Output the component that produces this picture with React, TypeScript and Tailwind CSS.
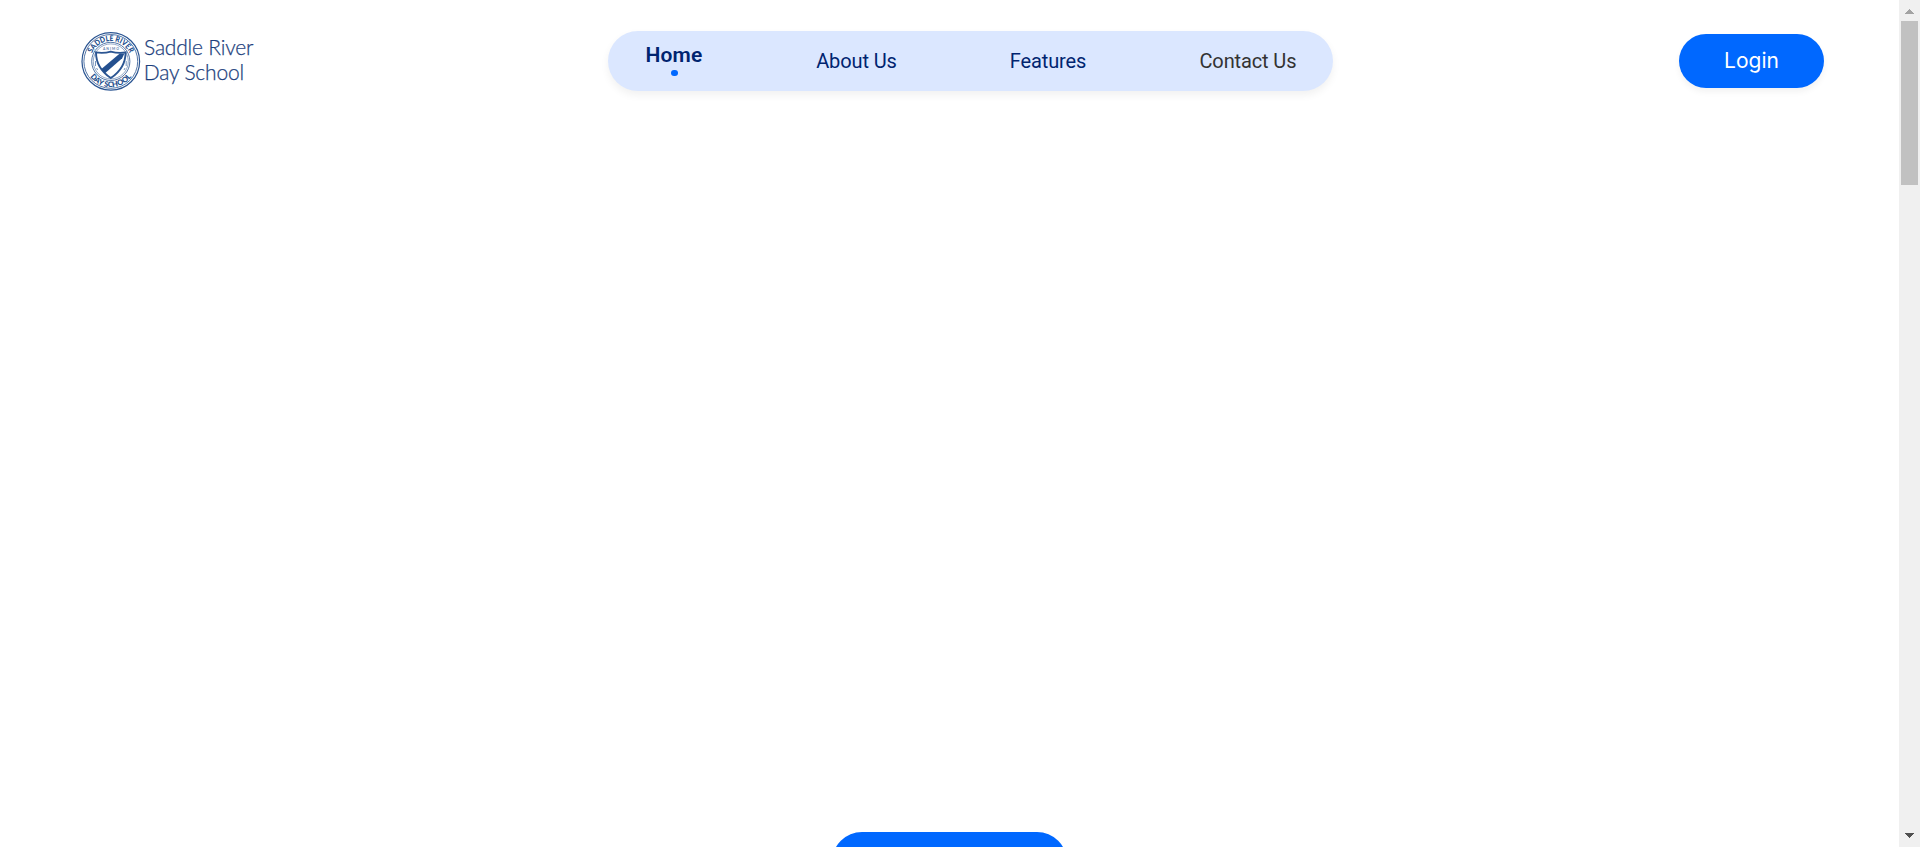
const links = [
  { label: 'About Us', width: 'w-[80px]', color: 'text-[#002470]' },
  { label: 'Features', width: 'w-[76px]', color: 'text-[#002470]' },
  { label: 'Contact Us', width: 'w-[96px]', color: 'text-[#333333]' },
];

function Logo() {
  return (
    <svg className="h-[60px] w-[176px] shrink-0" viewBox="0 0 176 60" fill="none" aria-label="Saddle River Day School">
      <defs>
        <path id="seal-top" d="M9.6 30.2 A20.2 20.2 0 0 1 50 30.2" />
        <path id="seal-bottom" d="M3.9 30.2 A25.9 25.9 0 0 0 55.7 30.2" />
      </defs>
      <g stroke="#2b5592">
        <circle cx="29.8" cy="30.4" r="28.8" strokeWidth="1.2" />
        <circle cx="29.8" cy="30.4" r="26.9" strokeWidth=".8" />
        <circle cx="29.8" cy="30.4" r="19.1" strokeWidth=".8" />
        <circle cx="29.8" cy="30.4" r="17.5" strokeWidth=".5" />
        <path d="M15 21.4Q22.5 22.6 29.8 20.6Q37.2 22.6 44.6 21.4Q44.6 37 29.8 47Q15 37 15 21.4Z" fill="white" strokeWidth="1.9" />
      </g>
      <path d="M20.4 38L38.8 22.4L43.4 22.4L41.2 27.2L24 42.2Z" fill="#24508f" />
      <path d="M14.5 30v5M15.6 37l1 2M45.2 30v5M44 37l-1 2" stroke="#7895bd" strokeWidth="1" />
      <g fill="#214c8b" fontFamily="Lato, sans-serif">
        <text fontSize="7.8" fontWeight="900">
          <textPath href="#seal-top" startOffset="50%" textAnchor="middle" textLength="47" lengthAdjust="spacingAndGlyphs">SADDLE RIVER</textPath>
        </text>
        <text fontSize="7.6" fontWeight="900">
          <textPath href="#seal-bottom" startOffset="50%" textAnchor="middle" textLength="48" lengthAdjust="spacingAndGlyphs">DAY SCHOOL</textPath>
        </text>
        <text x="22" y="18.8" fontSize="3.4" fontWeight="700" opacity=".75" textLength="16">ANIMO</text>
      </g>
      <g fill="#1d3f7d" stroke="#1d3f7d" strokeWidth=".25" fontFamily="Lato, sans-serif" fontWeight="300" fontSize="21">
        <text x="63" y="24.3" textLength="109.5">Saddle River</text>
        <text x="62.7" y="49.3" textLength="100.5">Day School</text>
      </g>
    </svg>
  );
}

export default function App() {
  return (
    <div className="flex h-[847px] w-full overflow-hidden bg-white font-['Roboto',sans-serif]">
      <main className="flex min-w-0 flex-1 flex-col justify-between">
        <header className="flex items-start pt-[31px] pr-[75px] pl-[81px]">
          <Logo />
          <nav className="ml-[351px] flex h-[60px] w-[725px] shrink-0 items-center justify-between rounded-full bg-[#dbe7ff] px-[37.5px] text-[20px] leading-[24px] tracking-[-0.12px] shadow-[0_4px_8px_rgba(0,0,0,0.06)]">
            <a className="flex w-[57px] flex-col items-center pb-[3px] text-[21px] font-semibold tracking-[0.2px] text-[#002470]">
              <span>Home</span>
              <span className="mt-[3px] h-[6px] w-[7px] rounded-full bg-[#0068ff]" />
            </a>
            {links.map((link) => (
              <a key={link.label} className={`${link.width} ${link.color} whitespace-nowrap`}>{link.label}</a>
            ))}
          </nav>
          <button className="mt-[3px] ml-auto flex h-[54px] w-[145px] items-center justify-center rounded-full bg-[#0068ff] font-['Inter',sans-serif] text-[21px] text-white shadow-[0_4px_6px_rgba(0,0,0,0.05)]">
            Login
          </button>
        </header>
        <div className="flex h-[15px] justify-center overflow-hidden">
          <div className="h-[60px] w-[235px] shrink-0 rounded-[30px] bg-[#0068ff]" />
        </div>
      </main>
      <aside className="flex w-[21px] shrink-0 flex-col items-center bg-[#f0f0f0]">
        <svg className="h-[21px] w-[21px] shrink-0" viewBox="0 0 21 21" shapeRendering="crispEdges">
          <path d="M6 14L10.5 9L15 14Z" fill="#a3a3a3" />
        </svg>
        <div className="h-[164px] w-[17px] bg-[#c1c1c1]" />
        <svg className="mt-auto h-[21px] w-[21px] shrink-0" viewBox="0 0 21 21" shapeRendering="crispEdges">
          <path d="M6 7H15L10.5 12Z" fill="#505050" />
        </svg>
      </aside>
    </div>
  );
}
